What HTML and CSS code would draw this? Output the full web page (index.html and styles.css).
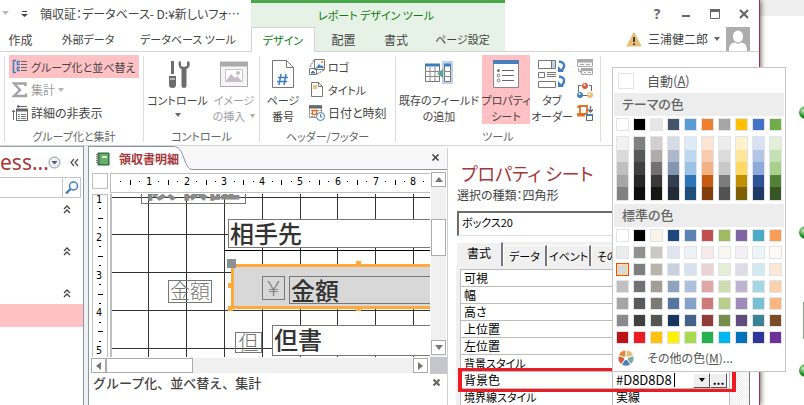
FILE: index.html
```html
<!DOCTYPE html>
<html lang="ja">
<head>
<meta charset="utf-8">
<title>領収証：データベース</title>
<link rel="stylesheet" href="styles.css">
</head>
<body>
<div class="desktop">
  <div class="window">
    <header class="top">
      <div class="titlebar">
        <div class="quick">
          <svg width="36" height="27" aria-hidden="true"><path d="M2 11h7l-3.500 4z" fill="#b9b9b9"/><path d="M22 11.500h5" stroke="#444"/><path d="M21 14h7l-3.500 3z" fill="#444"/></svg>
        </div>
        <h1 class="caption">領収証：データベース- D:¥新しいフォ…</h1>
        <div class="context-title">レポート デザイン ツール</div>
        <div class="win-buttons">
          <button type="button" aria-label="ヘルプ">?</button>
          <button type="button" aria-label="最小化"><svg width="12" height="12"><path d="M2 8h8" stroke="#666" stroke-width="2"/></svg></button>
          <button type="button" aria-label="最大化"><svg width="12" height="12"><path d="M1.500 1.500h9v9h-9z" fill="none" stroke="#666"/><path d="M1 2.500h10" stroke="#666" stroke-width="3"/></svg></button>
          <button type="button" aria-label="閉じる"><svg width="12" height="12"><path d="M2 2l8 8M10 2l-8 8" stroke="#666" stroke-width="2.200"/></svg></button>
        </div>
      </div>
      <nav class="tabs">
        <div class="tab-set">
          <a href="#" class="tab create">作成</a>
          <a href="#" class="tab external kana">外部データ</a>
          <a href="#" class="tab dbtools kana">データベース ツール</a>
        </div>
        <div class="tab-set context">
          <a href="#" class="tab design kana active">デザイン</a>
          <a href="#" class="tab arrange">配置</a>
          <a href="#" class="tab format">書式</a>
          <a href="#" class="tab setup kana">ページ設定</a>
        </div>
        <div class="user">
          <svg width="16" height="16" aria-hidden="true"><path d="M8 1.500L15 15H1z" fill="#e8bd78" stroke="#e8bd78"/><path d="M8 6v5M8 12.500v1.500" stroke="#333" stroke-width="1.800"/></svg>
          <span>三浦健二郎</span>
          <svg width="6" height="4" aria-hidden="true"><path d="M0 0h6L3 4z" fill="#666"/></svg>
          <svg class="avatar" width="24" height="24" aria-hidden="true"><path d="M0 0h24v24H0z" fill="#adadad"/><ellipse cx="12" cy="9.500" rx="5" ry="6" fill="#fff"/><path d="M3 24c0-7 3-8 6-8.500l3 1.500 3-1.500c3 .5 6 1.500 6 8.500z" fill="#fff"/></svg>
        </div>
      </nav>
    </header>

    <section class="ribbon" aria-label="リボン">
      <div class="group g-totals">
        <div class="group-body rows">
          <button type="button" class="row-btn on"><svg width="16" height="16"><path d="M4 1.500H1.500v12H4M8 2.500H5.500v3H8M8 8.500H5.500v3H8" fill="none" stroke="#3f7fbf" stroke-width="1.600"/><path d="M9 2.500h6M9 5.500h6M9 8.500h6M9 11.500h6" stroke="#666"/></svg>グループ化と並べ替え</button>
          <button type="button" class="row-btn kanji off"><svg width="16" height="16"><path d="M13.500 4V1.500H2L8 8l-6 6h12V11.500" fill="none" stroke="#a3a3a3" stroke-width="2.400"/></svg>集計<svg width="6" height="4"><path d="M0 0h6L3 4z" fill="#b5b5b5"/></svg></button>
          <button type="button" class="row-btn kanji"><svg width="16" height="16"><path d="M4.500 4.500h11v11h-11z" fill="#fff" stroke="#666"/><path d="M4 5h12" stroke="#666" stroke-width="3"/><path d="M6 9.500h2m1 0h5M6 11.500h2m1 0h5M6 13.500h2m1 0h5" stroke="#777"/><path d="M5 1.500h10M7 0L5 1.500 7 3M1.500 15V5M0 7l1.500-2L3 7" fill="none" stroke="#666"/></svg>詳細の非表示</button>
        </div>
        <div class="group-name">グループ化と集計</div>
      </div>
      <div class="group g-controls">
        <div class="group-body">
          <button type="button" class="big w-control"><svg width="28" height="30"><path d="M7 2h3v13H7zM5 17h7v9q0 3-3.500 3T5 26z" fill="#6d6d6d"/><path d="M6 20h5" stroke="#fff"/><path d="M15 2c-1 4 0 7 2.500 8v17q0 2 2.500 2t2.500-2V10c3-1 4-4 2.500-8l-2 1v4l-3 1-3-1V3z" fill="#6d6d6d"/></svg><span>コントロール</span><svg class="arrow" width="6" height="4"><path d="M0 0h6L3 4z" fill="#666"/></svg></button>
          <button type="button" class="big off w-image"><svg width="28" height="30"><path d="M.5 3.500h27v24H.5z" fill="#f5f5f5" stroke="#b1a9b1"/><path d="M0 5h28" stroke="#aaa" stroke-width="5"/><path d="M5.500 10.500h17v12h-17z" fill="#fff" stroke="#c8c3c8"/><path d="M6 22l5-7 4 4 2-2 5 5z" fill="#c4bec4"/><circle cx="18" cy="14" r="2" fill="#c4bec4"/></svg><span>イメージ</span><span>の挿入 <svg width="5" height="4"><path d="M0 0h5L2.500 4z" fill="#aaa"/></svg></span></button>
        </div>
        <div class="group-name">コントロール</div>
      </div>
      <div class="group g-header">
        <div class="group-body">
          <button type="button" class="big w-page"><svg width="22" height="30"><path d="M.5 1.500h14l7 7v20H.5z" fill="#fff" stroke="#777"/><path d="M14.500 1.500v7h7" fill="none" stroke="#777"/><path d="M9 15l-2 11M14 15l-2 11M6 18.500h10M5 22.500h10" stroke="#3f7fbf" stroke-width="1.500"/></svg><span>ページ</span><span>番号</span></button>
          <div class="rows">
            <button type="button" class="row-btn"><svg width="16" height="16"><path d="M5.500.5h10v10h-10zM.5 9.500h7v6h-7z" fill="#fff" stroke="#777"/><path d="M7 9l3-4 2 2 1-1 2 3z" fill="#3f7fbf"/><path d="M12 2h2v2h-2z" fill="#e8a33d"/><path d="M2 14l2-2 2 2z" fill="#3f7fbf" stroke="#3f7fbf"/><path d="M1 8l4-7M8 15l7-4" stroke="#666" stroke-dasharray="2 1"/></svg>ロゴ</button>
            <button type="button" class="row-btn"><svg width="16" height="16"><path d="M2.500.5h7l4 4v10h-11z" fill="#fff" stroke="#777"/><path d="M9.500.5v4h4" fill="none" stroke="#777"/><path d="M4 3h4v4H4z" fill="#eebf7e"/></svg>タイトル</button>
            <button type="button" class="row-btn kanji"><svg width="16" height="16"><path d="M.5.5h12v12H.5z" fill="#fff" stroke="#999"/><path d="M0 2h13" stroke="#666" stroke-width="3"/><path d="M2 5.500h10M2 8.500h2M2 11.500h4" stroke="#888" stroke-dasharray="2 1"/><path d="M3.500 5.500h4v4h-4z" fill="#fff" stroke="#e07020" stroke-width="1.500"/><circle cx="11.500" cy="11.500" r="4" fill="#fff" stroke="#3f7fbf"/><path d="M11.500 9v3h2" fill="none" stroke="#3f7fbf"/></svg>日付と時刻</button>
          </div>
        </div>
        <div class="group-name">ヘッダー/フッター</div>
      </div>
      <div class="group g-tools">
        <div class="group-body">
          <button type="button" class="big w-fields"><svg width="30" height="30"><path d="M18 2h11v23H18z" fill="#bed3ea"/><path d="M1.500 5.500h14v17h-14zM20.500 5.500h6v17h-6z" fill="#fff" stroke="#777"/><path d="M1 6h15M20 6h7" stroke="#3f7fbf" stroke-width="3"/><path d="M6 8v14M11 8v14M1 12.500h15M1 17.500h15M20 12.500h7M20 17.500h7" stroke="#888"/><path d="M19 10v9l-6-4.500z" fill="#5da38c"/></svg><span>既存のフィールド</span><span>の追加</span></button>
          <button type="button" class="big on w-props"><svg width="26" height="30"><path d="M.5 1.500h25v27H.5z" fill="#fff" stroke="#888"/><path d="M0 3h26" stroke="#4a80ba" stroke-width="4"/><path d="M9 11.500h12M9 16.500h12M9 21.500h12" stroke="#666"/><g fill="#777"><circle cx="5.500" cy="11.500" r="1.500"/></g><g fill="#fff" stroke="#777"><circle cx="5.500" cy="16.500" r="1.300"/><circle cx="5.500" cy="21.500" r="1.300"/></g></svg><span>プロパティ</span><span>シート</span></button>
          <button type="button" class="big w-order"><svg width="30" height="30"><path d="M1.500 1.500h17v8h-17zM1.500 13.500h6v5h-6zM1.500 22.500h17v6h-17z" fill="#fff" stroke="#777"/><path d="M14 2h4v7h-4z" fill="#bed3ea"/><path d="M14.500 2v7M10 13.500h9M10 15.500h9M10 17.500h9" stroke="#777"/><path d="M22 2.500q6 1 5 5t-4 4M22 17.500q6 1 5 5t-4 4" fill="none" stroke="#3f7fbf" stroke-width="2.400"/><path d="M21 7v6h6zM21 22v6h6z" fill="#3f7fbf"/></svg><span>タブ</span><span>オーダー</span></button>
          <div class="rows icons">
            <button type="button" class="row-btn" aria-label="サブフォーム"><svg width="16" height="16"><path d="M.5.5h15v7H.5zM4.500 9.500h11v6h-11z" fill="#f4f4f4" stroke="#aaa"/><path d="M0 2h16M4 10.500h12" stroke="#aaa" stroke-width="3"/><path d="M3 5.500h4m2 0h4M7 13.500h2m2 0h3M1.500 9v3.500H4M3 10.500l2 2-2 2" fill="none" stroke="#aaa"/></svg></button>
            <button type="button" class="row-btn" aria-label="コード"><svg width="16" height="16"><path d="M1.500 10V3.500h3M12 3.500h2.500V9M6 13.500h4" fill="none" stroke="#666"/><circle cx="8" cy="4" r="3" fill="#e15b35"/><circle cx="3" cy="13" r="3" fill="#3f7fbf"/><circle cx="13" cy="13" r="3" fill="#e9bd75"/><circle cx="7.500" cy="3" r="1" fill="#fff"/><circle cx="2.500" cy="12" r="1" fill="#fff"/><circle cx="12.500" cy="12" r="1" fill="#fff"/></svg></button>
            <button type="button" class="row-btn" aria-label="マクロ"><svg width="16" height="16"><path d="M3 9V1h7v8H1v1.500h7M3 1q-2 0-2 2" fill="none" stroke="#e07020" stroke-width="1.800"/><path d="M13.500 1v6M11 4.500L13.500 7 16 4.500" fill="none" stroke="#666" stroke-width="1.400"/><path d="M9.500 9.500h6v6h-6z" fill="#fff" stroke="#666"/><path d="M9 10h7" stroke="#3f7fbf" stroke-width="2"/></svg></button>
          </div>
        </div>
        <div class="group-name">ツール</div>
      </div>
    </section>

    <main class="work">
      <aside class="nav">
        <div class="nav-head">
          <h2>ess...</h2>
          <button type="button" class="round" aria-label="一覧"><svg width="13" height="13"><circle cx="6.500" cy="6.500" r="5.500" fill="#eceff3" stroke="#8f98a3"/><path d="M3.500 5h6l-3 3.500z" fill="#555d6b"/></svg></button>
          <button type="button" aria-label="折りたたむ"><svg width="9" height="9"><path d="M4 1L1 4.500 4 8M8 1L5 4.500 8 8" fill="none" stroke="#555" stroke-width="1.300"/></svg></button>
        </div>
        <div class="search">
          <input type="text" aria-label="検索">
          <button type="button" aria-label="検索する"><svg width="14" height="14"><circle cx="8.500" cy="5" r="4" fill="#fff" stroke="#3f7fbf" stroke-width="1.500"/><path d="M5.500 8L1 12.500" stroke="#3f7fbf" stroke-width="2.400"/></svg></button>
        </div>
        <ul class="sections">
          <li><svg width="8" height="9"><path d="M1 4l3-3 3 3M1 8l3-3 3 3" fill="none" stroke="#444" stroke-width="1.300"/></svg></li>
          <li><svg width="8" height="9"><path d="M1 4l3-3 3 3M1 8l3-3 3 3" fill="none" stroke="#444" stroke-width="1.300"/></svg></li>
          <li><svg width="8" height="9"><path d="M1 4l3-3 3 3M1 8l3-3 3 3" fill="none" stroke="#444" stroke-width="1.300"/></svg></li>
        </ul>
        <div class="nav-current"></div>
      </aside>

      <section class="doc">
        <div class="doc-tabs">
          <div class="doc-tab">
            <svg width="14" height="14" aria-hidden="true"><path d="M2 1h11v12H2z" fill="#3f8f4a" stroke="#2b6b35"/><path d="M4 2h8v10H4z" fill="#67ad6c"/><path d="M6 4h5v2H6z" fill="#cfe8cf"/><path d="M0 2.500h4M0 4.500h4M0 6.500h4M0 8.500h4M0 10.500h4" stroke="#777"/></svg>
            <span>領収書明細</span>
          </div>
          <svg class="slope" width="22" height="24" aria-hidden="true"><path d="M0 0h1c7 0 8 5 11 12s4 11 10 11v1H0z" fill="#fff"/><path d="M0 .5c8 0 9 4 12 12s4 11 10 11" fill="none" stroke="#8c95a0"/></svg>
          <div class="doc-rest"><button type="button" aria-label="タブを閉じる"><svg width="9" height="9"><path d="M1.500 1.500l6 6M7.500 1.500l-6 6" stroke="#444" stroke-width="1.600"/></svg></button></div>
        </div>
        <div class="designer">
          <div class="corner"></div>
          <svg class="ruler-h" id="ruler-h" aria-hidden="true"></svg>
          <div class="vscroll">
            <button type="button" aria-label="上へ"><svg width="8" height="5"><path d="M4 0l4 5H0z" fill="#777"/></svg></button>
            <div class="thumb"></div>
            <button type="button" aria-label="下へ"><svg width="8" height="5"><path d="M4 5l4-5H0z" fill="#777"/></svg></button>
          </div>
          <svg class="ruler-v" id="ruler-v" aria-hidden="true"></svg>
          <div class="canvas">
            <svg class="grid" id="grid" aria-hidden="true"></svg>
            <div class="item heading">領収証</div>
            <div class="item rule"></div>
            <div class="item field payee">相手先</div>
            <div class="item box"></div>
            <div class="item label amount-label">金額</div>
            <div class="item label yen">￥</div>
            <div class="item field amount">金額</div>
            <div class="item label note-label">但</div>
            <div class="item field note">但書</div>
            <i class="handle origin"></i><i class="handle h-left"></i><i class="handle h-corner"></i><i class="handle h-top"></i><i class="handle h-bottom"></i>
          </div>
          <div class="hscroll">
            <button type="button" aria-label="左へ"><svg width="5" height="8"><path d="M0 4l5-4v8z" fill="#777"/></svg></button>
            <div class="thumb"></div>
            <button type="button" aria-label="右へ"><svg width="5" height="8"><path d="M5 4L0 0v8z" fill="#777"/></svg></button>
          </div>
          <div class="size-box"></div>
        </div>
        <div class="sort-pane"><span>グループ化、並べ替え、集計</span><button type="button" aria-label="閉じる"><svg width="9" height="9"><path d="M1.500 1.500l6 6M7.500 1.500l-6 6" stroke="#666" stroke-width="2.200"/></svg></button></div>
      </section>

      <section class="props">
        <h2>プロパティ シート</h2>
        <p>選択の種類：四角形</p>
        <input class="object" type="text" aria-label="オブジェクト" value="ボックス20">
        <div class="sheet">
          <div class="sheet-tabs">
            <button type="button" class="active">書式</button><button type="button" class="kana">データ</button><button type="button" class="kana">イベント</button><button type="button" class="kana">その他</button>
          </div>
          <div class="sheet-body">
            <table>
              <tbody>
                <tr><th scope="row">可視</th><td></td></tr>
                <tr><th scope="row">幅</th><td></td></tr>
                <tr><th scope="row">高さ</th><td></td></tr>
                <tr><th scope="row">上位置</th><td></td></tr>
                <tr><th scope="row">左位置</th><td></td></tr>
                <tr><th scope="row" class="kana">背景スタイル</th><td></td></tr>
                <tr class="marked"><th scope="row"><label for="back-color">背景色</label></th><td><div class="value"><input id="back-color" type="text" value="#D8D8D8"><i class="caret"></i><button type="button" aria-label="一覧"><svg width="6" height="4"><path d="M0 0h6L3 4z"/></svg></button><button type="button" aria-label="ビルド">...</button></div></td></tr>
                <tr><th scope="row" class="kana">境界線スタイル</th><td>実線</td></tr>
              </tbody>
            </table>
            <div class="sheet-scroll"></div>
            <div class="callout"></div>
          </div>
        </div>
      </section>
    </main>
  </div>

  <div class="behind">
    <div class="behind-bar"></div>
    <i class="ball first"></i><i class="ball second"></i><i class="ball third"></i><i class="sliver"></i>
  </div>

  <div class="picker" role="dialog" aria-label="色">
    <button type="button" class="auto"><i></i><span>自動(<u>A</u>)</span></button>
    <h3>テーマの色</h3>
    <div class="swatches theme" id="theme"></div>
    <div class="swatches ramps" id="ramps"></div>
    <h3>標準の色</h3>
    <div class="swatches standard" id="standard"></div>
    <button type="button" class="more"><svg width="16" height="16" aria-hidden="true"><g stroke="#fff"><path d="M8 8V0a8 8 0 0 1 7.600 5.500z" fill="#eabb74"/><path d="M8 8l7.600-2.500a8 8 0 0 1-2.900 9z" fill="#7faa9c"/><path d="M8 8l4.700 6.500a8 8 0 0 1-9.400 0z" fill="#4a80ba"/><path d="M8 8l-4.700 6.500a8 8 0 0 1-2.900-9z" fill="#d2603f"/><path d="M8 8L.4 5.500A8 8 0 0 1 8 0z" fill="#e5883e"/></g><circle cx="8" cy="8" r="2" fill="#fff"/></svg><span>その他の色(<u>M</u>)...</span></button>
  </div>
</div>
<script src="script.js"></script>
</body>
</html>
```

FILE: styles.css
```css
* { box-sizing: border-box; }
body {
  margin: 0;
  font: 12px/16px "Noto Sans CJK JP", sans-serif;
  font-feature-settings: "palt";
  color: #444;
  background: #fff;
}
h1, h2, h3, p, ul { margin: 0; padding: 0; font-weight: 400; list-style: none; }
button { margin: 0; padding: 0; border: 0; background: none; font: inherit; font-feature-settings: inherit; color: inherit; }
input { font: inherit; font-feature-settings: inherit; color: #000; border: 0; padding: 0; min-width: 0; outline: 0; }
a { color: inherit; text-decoration: none; }
svg { display: block; flex: none; }
.kana { font-size: 11px; }

.desktop { position: relative; display: flex; height: 100vh; overflow: hidden; }
.window {
  flex: 1; min-width: 0; display: flex; flex-direction: column; background: #fff;
  border-right: 1px solid #a4373a; box-shadow: 1px 0 5px #0009; z-index: 1;
}

/* Title bar and tabs */
.titlebar { display: flex; height: 27px; }
.quick { width: 40px; }
.caption { width: 211px; font-size: 12px; line-height: 27px; white-space: nowrap; }
.context-title {
  width: 254px; padding-right: 4px; border-top: 3px solid #4aa84a; background: #e6f2e6; color: #0e7a0e;
  font-size: 11px; text-align: center; line-height: 24px;
}
.win-buttons { margin-left: auto; display: flex; align-items: center; gap: 17px; padding-right: 9px; }
.win-buttons button { width: 12px; height: 16px; display: flex; align-items: center; justify-content: center; font: bold 14px/16px "Open Sans", sans-serif; color: #666; }
.tabs { display: flex; height: 25px; border-bottom: 1px solid #d4d4d4; }
.tab-set { display: flex; width: 251px; }
.tab { text-align: center; line-height: 25px; height: 24px; white-space: nowrap; }
.create { width: 41px; }
.external { width: 94px; }
.dbtools { width: 106px; }
.context { width: 254px; background: #e6f2e6; }
.design { width: 64px; }
.arrange { width: 57px; }
.format { width: 48px; }
.setup { width: 85px; }
.tab.active { height: 25px; background: #fff; border: 1px solid #d4d4d4; border-bottom: 0; color: #0e7a0e; }
.user { margin-left: auto; display: flex; align-items: center; gap: 6px; padding-right: 9px; }

/* Ribbon */
.ribbon { display: flex; height: 94px; padding: 3px 0 3px 4px; border-bottom: 1px solid #d4d4d4; font-size: 11px; }
.group { display: flex; flex-direction: column; border-left: 1px solid #dcdcdc; margin-top: 1px; }
.group-body { display: flex; height: 69px; margin-top: -1px; }
.group-name { text-align: center; line-height: 16px; padding-top: 4px; color: #666; white-space: nowrap; }
.g-totals { width: 139px; }
.g-controls { width: 116px; }
.g-header { width: 136px; }
.g-tools { width: 206px; border-right: 1px solid #dcdcdc; }
.rows { display: flex; flex-direction: column; }
.g-totals .rows { padding: 0 4px; }
.row-btn { display: flex; align-items: center; gap: 3px; height: 23px; padding: 0 3px; white-space: nowrap; }
.kanji { font-size: 12px; }
.on { background: #ffc1c4; }
.off { color: #a0a0a0; }
.big { display: flex; flex-direction: column; align-items: center; padding-top: 4px; line-height: 16px; white-space: nowrap; }
.big span { display: flex; align-items: center; gap: 5px; }
.big .arrow { margin-top: 5px; }
.big > svg:first-child { margin-bottom: 3px; }
.w-control { width: 67px; }
.w-image { width: 46px; }
.w-page { width: 46px; }
.w-fields { width: 86px; }
.w-props { width: 48px; }
.w-order { width: 44px; }

/* Navigation pane */
.work { flex: 1; display: flex; min-height: 0; }
.nav { width: 83px; border-top: 1px solid #9aa2ab; overflow: hidden; }
.nav-head { display: flex; align-items: center; height: 30px; gap: 9px; }
.nav-head h2 { width: 48px; font: 21px/30px "Noto Sans", sans-serif; color: #a4373a; margin-right: -9px; }
.search { display: flex; height: 21px; margin-right: 2px; border: 1px solid #c6c6c6; border-left: 0; }
.search input { flex: 1; }
.search button { width: 18px; padding-left: 2px; border-left: 1px solid #c6c6c6; }
.sections { padding-top: 7px; }
.sections li { height: 42px; padding-left: 63px; }
.sections li:last-child { height: 16px; }
.nav-current { height: 23px; margin-top: -1px; background: #ffc1c4; }

/* Report designer */
.doc { flex: 1; min-width: 0; display: flex; flex-direction: column; border-left: 1px solid #8c95a0; margin-left: 5px; box-shadow: -4px 0 #eef1f4, -5px 0 #8c95a0; }
.doc-tabs { display: flex; height: 24px; background: #f8f8f8; }
.doc-tab { display: flex; align-items: center; gap: 9px; width: 83px; padding-left: 7px; border-top: 1px solid #8c95a0; background: #fff; color: #a4373a; font-weight: 700; white-space: nowrap; }
.doc-tab span { position: relative; z-index: 1; }
.doc-rest { flex: 1; display: flex; align-items: center; justify-content: flex-end; padding-right: 7px; border-bottom: 1px solid #8c95a0; }
.designer { display: grid; grid-template-columns: 20px minmax(0, 1fr) 17px; grid-template-rows: 24px 163px 17px; padding-left: 1px; }
.corner { width: 16px; height: 16px; margin: 3px 0 0 2px; border: 1px solid #bfbfbf; }
.ruler-h { width: 100%; height: 20px; margin-top: 3px; border: solid #bfbfbf; border-width: 1px 0 1px 1px; }
.ruler-v { width: 16px; height: 163px; margin-left: 2px; border: solid #bfbfbf; border-width: 1px 1px 0; }
.ruler-h text, .ruler-v text { font: 10px "DejaVu Sans Mono", monospace; fill: #000; text-anchor: middle; }
.vscroll { grid-column: 3; grid-row: 1 / 3; display: flex; flex-direction: column; margin: 2px 1px 0; background: #f0f0f0; }
.vscroll button, .hscroll button { width: 15px; height: 15px; display: flex; align-items: center; justify-content: center; border: 1px solid #ababab; background: #fff; }
.thumb { background: #fff; border: 1px solid #ababab; }
.vscroll .thumb { height: 37px; margin: 32px 0 84px; }
.hscroll { grid-column: 1 / 3; display: flex; margin: 1px 2px 1px 1px; background: #f0f0f0; }
.hscroll .thumb { width: 87px; margin-right: auto; }
.size-box { background: #c5c6cb; }
.canvas { position: relative; overflow: hidden; border-left: 2px solid #bfbfbf; background: #fff; }
.grid { position: absolute; inset: 0; width: 100%; height: 100%; stroke: #333; }
.item { position: absolute; border: 1px solid #777; white-space: nowrap; font-feature-settings: normal; }
.field { right: -9px; padding-left: 1px; background: #fff; font-size: 24px; font-weight: 500; color: #333; }
.label { color: #777; text-align: center; font-size: 20px; font-weight: 300; line-height: 20px; }
.heading { left: 29px; top: -24px; width: 105px; height: 34px; padding-left: 2px; font: 900 32px/24px "Noto Sans CJK JP", sans-serif; color: #8a8a8a; }
.payee { left: 116px; top: 25px; height: 29px; line-height: 26px; }
.rule { left: 112px; right: 0; top: 56px; border: 0; border-top: 1px solid #000; }
.box { left: 119px; right: -9px; top: 70px; height: 45px; border: 3px solid #ffa93c; background: #d8d8d8; }
.amount-label { left: 56px; top: 86px; width: 44px; height: 23px; }
.yen { left: 150px; top: 82px; width: 23px; height: 24px; line-height: 22px; }
.amount { left: 177px; top: 82px; height: 28px; line-height: 26px; background: #d8d8d8; }
.note-label { left: 123px; top: 138px; width: 27px; height: 21px; line-height: 18px; }
.note { left: 160px; top: 131px; height: 31px; line-height: 26px; }
.handle { position: absolute; width: 5px; height: 5px; background: #ffa93c; }
.origin { left: 115px; top: 65px; width: 9px; height: 9px; background: #8b8f96; }
.h-left { left: 116px; top: 89px; }
.h-corner { left: 116px; top: 112px; }
.h-top { left: 244px; top: 67px; }
.h-bottom { left: 244px; top: 112px; }
.sort-pane { display: flex; justify-content: space-between; align-items: center; padding: 0 6px 0 4px; height: 17px; font-size: 13px; font-feature-settings: normal; font-weight: 500; }

/* Property sheet */
.props { width: 312px; border-left: 1px solid #cfcfcf; margin-top: 2px; padding-left: 8px; overflow: hidden; }
.props h2 { padding: 12px 0 0 5px; font-size: 18px; line-height: 26px; font-weight: 400; color: #a4373a; }
.props p { padding-left: 1px; line-height: 18px; }
.object { display: block; width: 280px; height: 25px; margin: 7px 0 6px 1px; padding: 0 3px 5px; border: solid #6d6d6d; border-width: 2px 1px 1px 2px; border-bottom-color: #ddd; font-size: 11px; }
.sheet { width: 294px; background: #f0f0f0; border-right: 1px solid #777; }
.sheet-tabs { display: flex; height: 24px; align-items: flex-end; color: #000; }
.sheet-tabs button { width: 44px; height: 21px; border: 1px solid #fff; border-right: 2px solid #777; border-bottom: 0; white-space: nowrap; }
.sheet-tabs .active { width: 47px; height: 24px; padding-bottom: 4px; }
.sheet-body { position: relative; display: flex; padding: 3px 0 0 4px; }
table { width: 270px; border-collapse: collapse; table-layout: fixed; background: #fff; color: #000; }
th, td { height: 17px; padding: 0 0 0 3px; border: 1px solid #bdbdbd; font-weight: 400; line-height: 16px; text-align: left; white-space: nowrap; }
th { width: 152px; }
.value { display: flex; height: 16px; align-items: center; }
.value input { width: 58px; height: 16px; font-size: 13px; }
.value .caret { width: 1px; height: 14px; margin-right: 18px; background: #000; }
.value button { width: 17px; height: 15px; display: flex; align-items: center; justify-content: center; background: #eee; border: 1px solid #fff; border-right-color: #555; border-bottom-color: #555; font-weight: 700; line-height: 8px; }
.sheet-scroll { flex: 1; background: repeating-conic-gradient(#fff 0 25%, #ececec 0 50%) 0 0 / 2px 2px; }
.callout { position: absolute; left: 2px; top: 102px; width: 278px; height: 24px; border: 4px solid #ed1c24; border-width: 3px 4px; }

/* Page behind the window */
.behind { position: relative; width: 44px; overflow: hidden; }
.behind-bar { height: 16px; background: #efefef; }
.ball { position: absolute; right: -8px; width: 13px; height: 13px; border-radius: 50%; background: radial-gradient(circle at 35% 35%, #c8f0c0, #239023 45%, #065006); }
.first { top: 106px; }
.second { top: 226px; }
.third { top: 364px; }
.sliver { position: absolute; right: 0; top: 302px; width: 1px; height: 37px; background: #7fa87f; }

/* Color picker */
.picker { position: absolute; z-index: 2; right: 18px; top: 67px; width: 174px; padding: 1px; border: 1px solid #c6c6c6; background: #fff; color: #555; }
.picker h3 { height: 23px; padding-left: 8px; background: #ededed; color: #666; font-size: 13px; line-height: 22px; font-weight: 500; }
.auto, .more { display: flex; align-items: center; gap: 13px; width: 100%; height: 24px; padding-left: 4px; }
.auto { font-size: 13px; }
.auto i { width: 16px; height: 16px; border: 1px solid #e2e4e7; }
.swatches { display: grid; grid-template-columns: repeat(10, 13px); gap: 4px; padding: 2px; }
.swatches button, .ramp { border: 1px solid #e2e4e7; }
.swatches button { width: 13px; height: 13px; }
.theme, .ramps { padding-bottom: 3px; }
.ramp { display: grid; grid-template-rows: repeat(5, 1fr); height: 65px; }
.swatches .ramp button { width: 11px; height: auto; border: 0; }
.swatches .picked { border-color: #f04a10; box-shadow: inset 0 0 0 1px #ffe294; }
```

FILE: script.js
```js
const SVG = "http://www.w3.org/2000/svg";
const UNIT = 37.8;

function add(parent, name, attrs, text) {
  const node = document.createElementNS(SVG, name);
  for (const key in attrs) node.setAttribute(key, attrs[key]);
  if (text) node.textContent = text;
  parent.appendChild(node);
}

function line(parent, x1, y1, x2, y2) {
  add(parent, "line", { x1, y1, x2, y2, "shape-rendering": "crispEdges" });
}

function mark(svg, x, y, width, height) {
  add(svg, "rect", { x: Math.round(x), y: Math.round(y), width, height });
}

// Centimetre rulers: a number per unit, a tick at the half, dots at the quarters.
const rulerH = document.getElementById("ruler-h");
const rulerV = document.getElementById("ruler-v");
const grid = document.getElementById("grid");

function drawRulers() {
  [rulerH, rulerV, grid].forEach(svg => svg.replaceChildren());
  const width = rulerH.getBoundingClientRect().width;
  const height = rulerV.getBoundingClientRect().height;
  for (let n = 1; (n - 1) * UNIT < width; n++) {
    const x = n * UNIT;
    if (x + 8 < width) add(rulerH, "text", { x: Math.round(x), y: 11 }, String(n));
    mark(rulerH, x - UNIT * 0.75, 7, 1, 1);
    mark(rulerH, x - UNIT * 0.5, 6, 1, 5);
    mark(rulerH, x - UNIT * 0.25, 7, 1, 1);
    const column = Math.floor(x - 1) + 0.5;
    line(grid, column, 0, column, height);
  }
  for (let n = 1; (n - 1) * UNIT + 4 < height; n++) {
    const y = (n - 1) * UNIT + 4;
    add(rulerV, "text", { x: 6, y: Math.round(y) + 4 }, String(n));
    mark(rulerV, 6, y + UNIT * 0.25, 2, 1);
    mark(rulerV, 5, y + UNIT * 0.5, 5, 1);
    mark(rulerV, 6, y + UNIT * 0.75, 2, 1);
    const row = Math.floor(y - 1) + 0.5;
    line(grid, 0, row, width, row);
  }
}
drawRulers();
window.addEventListener("resize", drawRulers);

function swatch(parent, color) {
  const button = document.createElement("button");
  button.type = "button";
  button.style.background = "#" + color;
  button.setAttribute("aria-label", "#" + color);
  parent.appendChild(button);
  return button;
}

const theme = "ffffff 000000 e7e6e6 44546a 5b9bd5 ed7d31 a5a5a5 ffc000 4472c4 70ad47".split(" ");
theme.forEach(color => swatch(document.getElementById("theme"), color));

const ramps = [
  "f2f2f2 d9d9d9 bfbfbf a6a6a6 808080",
  "808080 595959 404040 262626 0d0d0d",
  "d0cece aeabab 757070 3a3838 171616",
  "d6dce4 adb9ca 8496b0 323f4f 222a35",
  "deebf6 bdd7ee 9cc3e5 2e75b5 1e4e79",
  "fbe5d5 f7cbac f4b183 c55a11 833c0b",
  "ededed dbdbdb c9c9c9 7b7b7b 525252",
  "fff2cc fee599 ffd965 bf9000 7f6000",
  "d9e2f3 b4c6e7 8eaadb 2f5496 1f3864",
  "e2efd9 c5e0b3 a8d08d 538135 375623"
];
ramps.forEach(colors => {
  const ramp = document.createElement("div");
  ramp.className = "ramp";
  colors.split(" ").forEach(color => swatch(ramp, color));
  document.getElementById("ramps").appendChild(ramp);
});

const standard = [
  "ffffff 000000 faf3e8 1f497d 5c83b4 c0504d 9fbb61 8066a0 4bacc6 f79d56",
  "ececec 919191 cac8c0 dfe5ee edf2f8 f8eaeb f7f9f0 f2eff6 ecf5f9 fefaf6",
  "d8d8d8 7f7f7f bab5ac c7d2df d8e1ee edd2d2 e5eed7 dfdce8 d1eaf0 fce6d4",
  "bfbfbf 727272 a39e95 8fa3c0 aec1dc dfa6a8 cdddb0 bfb3d2 a5d6e3 fad0ad",
  "a5a5a5 5a5a5a 7c7a74 56759f 84a2c8 cf7b79 b7cf8b 9f8bb9 78c0d4 fab680",
  "8a8a8a 404040 545450 17365d 446389 903c39 758e48 5f4b7c 398394 7b4b26",
  "ba1419 ed1c24 ffc20e fff200 a8da4e 22b14c 00b7ef 0072bc 2f3699 6f3198"
];
standard.forEach((row, index) => {
  row.split(" ").forEach((color, column) => {
    const button = swatch(document.getElementById("standard"), color);
    if (index === 2 && column === 0) button.className = "picked";
  });
});
```
